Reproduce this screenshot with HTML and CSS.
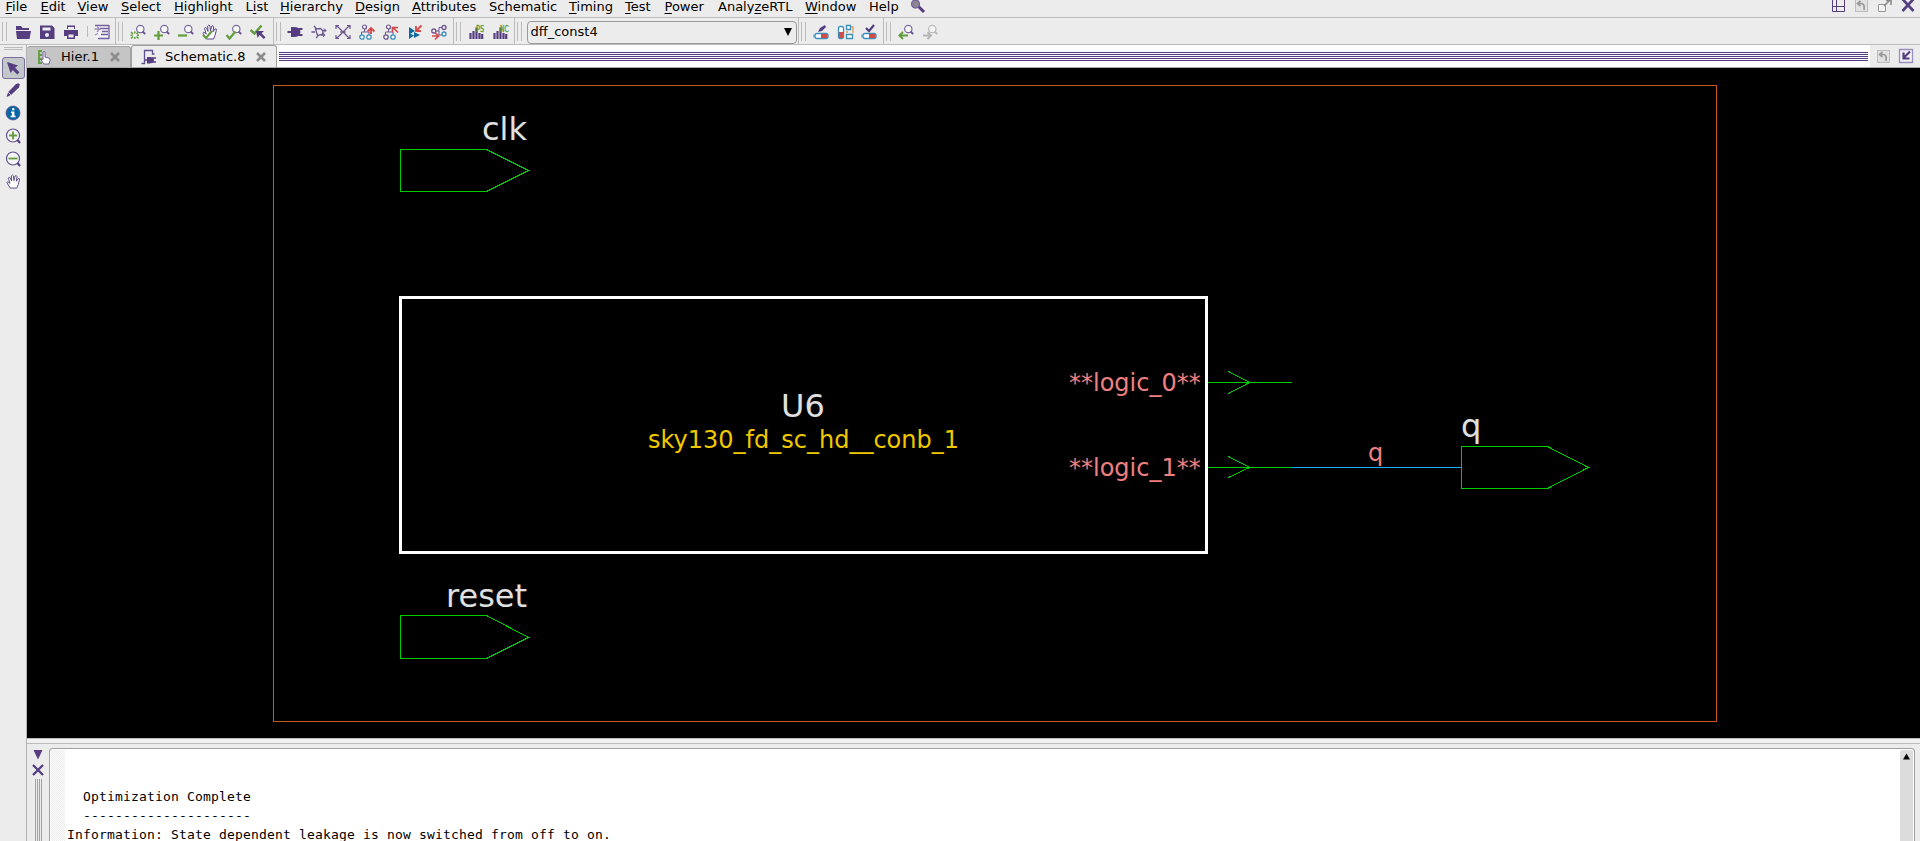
FILE: index.html
```html
<!DOCTYPE html>
<html lang="en">
<head>
<meta charset="utf-8">
<title>Schematic.8</title>
<link rel="stylesheet" href="styles.css">
</head>
<body>
<svg class="defs" aria-hidden="true">
  <defs>
    <symbol id="lens" viewBox="0 0 24 24"><circle cx="14.300" cy="9" r="3.700" fill="#f6f6f6" stroke="#7a68a0" stroke-width="1.200"/><path d="M16.500 11.500l2.700 2.500" stroke="#6b5690" stroke-width="1.900"/></symbol>
    <symbol id="hand" viewBox="0 0 16 16"><path d="M4.500 15L1 9.300Q1.200 7.500 3.200 9L4.300 10 2.500 4.500Q3 2.500 4.500 4.200L6 7.500 5.700 2Q6.800 0 8 2L8.400 7 9.700 2.200Q11 .8 11.700 2.800L11 7.800 13.200 4.800Q14.800 4.500 14.300 6.300L13 11.500 11.500 15z" fill="#fff" stroke="#594485" stroke-width="1"/></symbol>
    <symbol id="undo" viewBox="0 0 14 14"><rect x=".5" y=".5" width="12" height="12" fill="#e2e2e2" stroke="#bdbdbd"/><path d="M5.500 2L2.500 4.500l3 2.500M3 4.500h3.500q3.500.5 2.500 6.500" fill="none" stroke="#999" stroke-width="1.700"/></symbol>
    <symbol id="close" viewBox="0 0 12 12"><path d="M2 2l8 8M10 2l-8 8" stroke="currentColor" stroke-width="2.600"/></symbol>
    <symbol id="bars" viewBox="0 0 24 24"><path d="M6.500 19v-6M9.500 19v-8M12.500 19V7.500M15.500 19v-6M18.200 19v-5" stroke="#553d80" stroke-width="2.200"/></symbol>
    <symbol id="battery" viewBox="0 0 24 24"><rect x="5" y="13.500" width="13" height="5" rx="2" fill="#fff" stroke="#3b8fbd" stroke-width="1.300"/><rect x="11" y="14" width="6.500" height="4" fill="#d24b4b"/><path d="M4 14.500v3" stroke="#3b8fbd"/></symbol>
  </defs>
</svg>

<div class="app">
  <header class="menubar">
    <nav class="menus">
      <span><u>F</u>ile</span><span><u>E</u>dit</span><span><u>V</u>iew</span><span><u>S</u>elect</span><span><u>H</u>ighlight</span><span>L<u>i</u>st</span><span><u>H</u>ierarchy</span><span><u>D</u>esign</span><span><u>A</u>ttributes</span><span>S<u>c</u>hematic</span><span><u>T</u>iming</span><span><u>T</u>est</span><span><u>P</u>ower</span><span>Analy<u>z</u>eRTL</span><span><u>W</u>indow</span><span>Help</span>
      <svg class="finder" viewBox="0 0 16 14"><path d="M8 6l6 6" stroke="#553d80" stroke-width="3"/><circle cx="5.500" cy="4" r="4" fill="#8a8793" stroke="#7462a0" stroke-width="1.300"/></svg>
    </nav>
    <div class="window-tools">
      <svg viewBox="0 0 16 14"><path d="M1.500 0v11.500h12V0M5.500 0v11.500M1.500 6.500h12" fill="none" stroke="#553d80"/></svg>
      <svg viewBox="0 0 16 14"><use href="#undo" x="1" y="-1" width="14" height="14"/></svg>
      <svg viewBox="0 0 16 14"><path d="M1.500 4.500h7v7h-7z" fill="#f2f2f2" stroke="#999"/><path d="M7 6l7-7M9 .5h5V5" fill="none" stroke="#8b8b8b" stroke-width="1.600"/></svg>
      <svg viewBox="0 0 16 14"><path d="M2.500-1l11 12M13.500-1l-11 12" stroke="#553d80" stroke-width="2.700"/></svg>
    </div>
  </header>

  <div class="toolbar">
    <div class="group g-file">
      <svg viewBox="0 0 24 24"><path d="M5 6h5l1.500 2H18v2H5zM5 11h15l-1.500 8H6z" fill="#553d80"/></svg>
      <svg viewBox="0 0 24 24"><path d="M5 5.500h12l2.500 2.500v11H5z" fill="#553d80"/><path d="M7.500 7.500h8v3h-8z" fill="#ececec"/><circle cx="12" cy="15" r="2" fill="#ececec"/></svg>
      <svg viewBox="0 0 24 24"><path d="M8 9V5.500h8V9M5 10h14v6h-3v3H8v-3H5z" fill="#553d80"/><path d="M9 7h6v2H9zM9.500 14.500h5v3h-5z" fill="#ececec"/></svg>
      <i class="mini-sep"></i>
      <svg viewBox="0 0 24 24"><path d="M5.500 6h13v13h-13z" fill="#f5f3f8"/><path d="M5 5.500h14M10 8.500h9M12 11.500h6M11 14.500h7M8 18.500h11M19 5v14" stroke="#7462a0" stroke-width="1.300"/><path d="M4.500 9h5L7 6.500M9.500 9L7 12M5 15l3-1.500" fill="none" stroke="#9a8cb8" stroke-width="1.300"/></svg>
    </div>
    <div class="group g-view">
      <svg viewBox="0 0 24 24"><use href="#lens"/><path d="M5 12l2 2M12.500 12l-2 2M5 18.500l2-2M12.500 18.500l-2-2M8.800 11.500v2M8.800 17v2M4.500 15.300h2M11 15.300h2" stroke="#619c3d" stroke-width="1.500"/></svg>
      <svg viewBox="0 0 24 24"><use href="#lens"/><path d="M8.500 11v9M4 15.500h9" stroke="#619c3d" stroke-width="2.200"/></svg>
      <svg viewBox="0 0 24 24"><use href="#lens"/><path d="M4 15.500h9" stroke="#619c3d" stroke-width="2.200"/></svg>
      <svg viewBox="0 0 24 24"><use href="#hand" x="4" y="4" width="16" height="16"/><path d="M5 15l3 3 6-7" fill="none" stroke="#619c3d" stroke-width="2.200"/></svg>
      <svg viewBox="0 0 24 24"><use href="#lens"/><path d="M4.500 15l3 3.500 6-7" fill="none" stroke="#619c3d" stroke-width="2.200"/></svg>
      <svg viewBox="0 0 24 24"><path d="M4.500 10l4 3.500 7-8" fill="none" stroke="#619c3d" stroke-width="2.400"/><path d="M10 11h8l-2.500 2.300 4 4-1.800 1.700-4-4L11.500 18z" fill="#553d80"/></svg>
    </div>
    <div class="group g-schem">
      <svg viewBox="0 0 24 24"><path d="M4.500 12h5M15 9h4.500M15 15h4.500" stroke="#553d80" stroke-width="1.800"/><path d="M8 7h3q6 0 6.500 5-.5 5-6.500 5H8z" fill="#553d80"/></svg>
      <svg viewBox="0 0 24 24"><path d="M4.500 12H8M15 10.500h4M14 15h4M8.500 9l5-.5q4 2.500 1.500 6l-4.500 1zM7 6l3 3.500M11 16l-2 2" fill="none" stroke="#6b5690" stroke-width="1.300"/><path d="M17 8.500l2 2-2 2M16 13l2 2-2 2" fill="none" stroke="#6b5690"/></svg>
      <svg viewBox="0 0 24 24"><path d="M5.500 5.500l13 13M18.500 5.500l-13 13M9 12h6M5 9V5.500h3M16 5.500h3V9M5 15v3.500h3M16 18.500h3V15" fill="none" stroke="#6b5690" stroke-width="1.200"/></svg>
      <svg viewBox="0 0 24 24"><path d="M9.500 9v3h-3v3M9.500 12H14v3" fill="none" stroke="#6b5690"/><circle cx="9.500" cy="7" r="2" fill="#f4f4f4" stroke="#6b5690" stroke-width="1.200"/><circle cx="7" cy="17" r="2.200" fill="#f4f4f4" stroke="#3b8fbd" stroke-width="1.300"/><circle cx="14" cy="17" r="2.200" fill="#f4f4f4" stroke="#3b8fbd" stroke-width="1.300"/><path d="M16 14V8.500M12.500 11.500L16 8l3.500 3.500" fill="none" stroke="#d24b4b" stroke-width="1.900"/></svg>
      <svg viewBox="0 0 24 24"><path d="M9.500 9v3h-3v3M9.500 12H14v3" fill="none" stroke="#6b5690"/><circle cx="9.500" cy="7" r="2" fill="#f4f4f4" stroke="#6b5690" stroke-width="1.200"/><circle cx="7" cy="17" r="2.200" fill="#f4f4f4" stroke="#6b5690" stroke-width="1.300"/><circle cx="14" cy="17" r="2.200" fill="#f4f4f4" stroke="#3b8fbd" stroke-width="1.300"/><path d="M19 12.500l-5-5M13.500 12V7.500H19" fill="none" stroke="#d24b4b" stroke-width="1.700"/></svg>
      <svg viewBox="0 0 24 24"><path d="M6 7l6 4-6 3.500zM6 13l5 2.500L6 19zM11 12l6 3-6 3z" fill="#0e68a0"/><path d="M18.500 5.500l-5 5M13 6v5h5" fill="none" stroke="#d24b4b" stroke-width="1.800"/></svg>
      <svg viewBox="0 0 24 24"><path d="M8 11h4V7.500h4M12 11v4h4" fill="none" stroke="#6b5690"/><circle cx="6.800" cy="11" r="2" fill="#f4f4f4" stroke="#6b5690" stroke-width="1.300"/><circle cx="17" cy="7.500" r="2" fill="#f4f4f4" stroke="#6b5690" stroke-width="1.300"/><circle cx="17" cy="14" r="2" fill="#f4f4f4" stroke="#3b8fbd" stroke-width="1.300"/><path d="M5 16h6M8 12.500l3.500 3.500L8 19.500" fill="none" stroke="#d24b4b" stroke-width="1.700"/></svg>
    </div>
    <div class="group g-hist">
      <svg viewBox="0 0 24 24"><use href="#bars"/><text class="badge" x="12" y="11.500" textLength="8" lengthAdjust="spacingAndGlyphs">PS</text></svg>
      <svg viewBox="0 0 24 24"><use href="#bars"/><text class="badge" x="12" y="11.500" textLength="8.500" lengthAdjust="spacingAndGlyphs">NC</text></svg>
    </div>
    <div class="group g-design">
      <div class="combo"><span>dff_const4</span><svg viewBox="0 0 8 8"><path d="M0 0h8L4 8z"/></svg></div>
    </div>
    <div class="group g-power">
      <svg viewBox="0 0 24 24"><use href="#battery"/><path d="M8 12l2-4 5-3 1 2-4 4z" fill="#553d80"/></svg>
      <svg viewBox="0 0 24 24"><rect x="4.500" y="6.500" width="5" height="12" rx="1.500" fill="#fff" stroke="#3b8fbd" stroke-width="1.300"/><path d="M5 12h4v6H5z" fill="#d24b4b"/><path d="M12.500 5.500h4v4h-4zM12.500 14.500h6v4h-6z" fill="#fff" stroke="#3b8fbd" stroke-width="1.300"/><path d="M17 7h2v6M12 12h2" fill="none" stroke="#e29a4f" stroke-width="1.300"/></svg>
      <svg viewBox="0 0 24 24"><use href="#battery"/><path d="M8 8l3 3 5-6" fill="none" stroke="#553d80" stroke-width="2.200"/></svg>
    </div>
    <div class="group g-last">
      <svg viewBox="0 0 24 24"><use href="#lens"/><path d="M5.500 15.500h8.500M9 12l-3.500 3.500L9 19" fill="none" stroke="#619c3d" stroke-width="2"/></svg>
      <svg viewBox="0 0 24 24"><circle cx="14.300" cy="9" r="3.700" fill="#f3f3f3" stroke="#bbb" stroke-width="1.200"/><path d="M16.500 11.500l2.700 2.500" stroke="#bbb" stroke-width="1.900"/><path d="M5 15.500h8M9.500 12l3.500 3.500L9.500 19" fill="none" stroke="#b5b5b5" stroke-width="2"/></svg>
    </div>
  </div>

  <div class="workspace">
    <aside class="sidebar">
      <i class="grip"></i>
      <div class="tool active"><svg viewBox="0 0 16 16"><path d="M2 2l11 3.500-3 2.300 4.500 4.500-2.200 2.200L7.800 10 5.500 13z" fill="#553d80"/></svg></div>
      <div class="tool"><svg viewBox="0 0 16 16"><path d="M1.500 15l1.700-5L11 2l2.500-.8 1.300 1.300-.8 3L6 13z" fill="#553d80"/><path d="M3.300 10.300l2.500 2.500" stroke="#ececec"/></svg></div>
      <div class="tool"><svg viewBox="0 0 16 16"><circle cx="8" cy="8" r="7" fill="#0667a6" stroke="#60508e" stroke-width=".8"/><path d="M7 3.300h2.400v2H7zM6 6.500h3.400v4.300h1.200v1.500H5.600v-1.500h1.300V8H6z" fill="#fff"/></svg></div>
      <div class="tool"><svg viewBox="0 0 16 16"><circle cx="8" cy="7.500" r="6.500" fill="#f5f5f5" stroke="#60508e" stroke-width="1.200"/><path d="M8 3.500v8M4 7.500h8" stroke="#619c3d" stroke-width="1.800"/><path d="M12.500 12l2.500 3" stroke="#553d80" stroke-width="2"/></svg></div>
      <div class="tool"><svg viewBox="0 0 16 16"><circle cx="8" cy="7.500" r="6.500" fill="#f5f5f5" stroke="#60508e" stroke-width="1.200"/><path d="M3.500 7.500h9" stroke="#619c3d" stroke-width="1.800"/><path d="M12.500 12l2.500 3" stroke="#553d80" stroke-width="2"/></svg></div>
      <div class="tool"><svg viewBox="0 0 16 16"><use href="#hand" x="1" y="0" width="15" height="15"/></svg></div>
    </aside>

    <main class="main">
      <div class="tabbar">
        <div class="tab inactive">
          <svg class="tab-icon" viewBox="0 0 16 16"><path d="M3 1v13h3M3 2h3M3 6h3M3 10h3" fill="none" stroke="#619c3d" stroke-width="1.800"/><path d="M7 3q1.500-1 2 0v5l4 1.200q1.500.5 1 2.500l-1 3.300H8l-3-4q.3-1.300 2-.3z" fill="#fff" stroke="#7462a0"/></svg>
          <span>Hier.1</span>
          <svg class="tab-close" viewBox="0 0 12 12"><use href="#close"/></svg>
        </div>
        <div class="tab current">
          <svg class="tab-icon" viewBox="0 0 16 16"><path d="M.5 14.500h3v-13h8V5h2" fill="none" stroke="#60508e" stroke-width="1.300"/><path d="M4 11h3M11 9h4M11 13h4" stroke="#553d80" stroke-width="1.500"/><path d="M6 8h3q4 .3 4 3t-4 3.500H6z" fill="#553d80"/></svg>
          <span>Schematic.8</span>
          <svg class="tab-close" viewBox="0 0 12 12"><use href="#close"/></svg>
        </div>
        <div class="stripes"></div>
        <div class="tab-tools">
          <svg viewBox="0 0 16 16"><use href="#undo" x="2" y="2" width="14" height="14"/></svg>
          <svg viewBox="0 0 16 16"><path d="M1.500 1.500h13v13h-13z" fill="#f1f0f5" stroke="#9a8fbb" stroke-width="1.300"/><path d="M12 3.500L6 9.500M5.500 4.500v6h6" fill="none" stroke="#553d80" stroke-width="2.200"/></svg>
        </div>
      </div>

      <svg class="schematic" viewBox="27 68 1893 670">
        <path class="sheet" d="M273.500 85.500h1443v636h-1443z"/>
        <g class="port">
          <path d="M400.500 149.500h86l42 21-42 21h-86z"/>
          <path d="M400.500 615.500h86l42 22-42 21h-86z"/>
          <path d="M1461.500 446.500h86l41 21-41 21h-86z"/>
          <path d="M1208 382.500h84M1228.500 371.500l21 11-21 11"/>
          <path d="M1208 467.500h83M1228.500 456.500l21 11-21 10"/>
        </g>
        <path class="net" d="M1291 467.500h170"/>
        <rect class="cell" x="400.500" y="297.500" width="806" height="255"/>
        <g class="name">
          <text x="482" y="140">clk</text>
          <text x="446" y="607">reset</text>
          <text x="1461" y="437">q</text>
          <text x="781" y="417">U6</text>
        </g>
        <text class="ref" x="648" y="448">sky130_fd_sc_hd__conb_1</text>
        <g class="pin">
          <text x="1069" y="391">**logic_0**</text>
          <text x="1069" y="476">**logic_1**</text>
          <text x="1368" y="461">q</text>
        </g>
      </svg>

      <section class="console">
        <div class="console-side">
          <svg class="collapse" viewBox="0 0 10 10"><path d="M.5 0h9L5 9.500z" fill="#553d80"/></svg>
          <svg class="dismiss" viewBox="0 0 12 12"><path d="M1 1l10 10M11 1L1 11" stroke="#553d80" stroke-width="2.300"/></svg>
          <i class="console-grip"></i>
        </div>
        <div class="log">
          <div class="gutter"></div>
          <pre>


  Optimization Complete
  ---------------------
Information: State dependent leakage is now switched from off to on.</pre>
          <div class="scrollbar"><svg viewBox="0 0 8 7"><path d="M0 7L4 0l4 7z"/></svg></div>
        </div>
      </section>
    </main>
  </div>
</div>
</body>
</html>
```
FILE: styles.css
```css
* { box-sizing: border-box; }
body {
  margin: 0;
  overflow: hidden;
  background: #ececec;
  color: #000;
  font: 13px/16px "DejaVu Sans", sans-serif;
}
svg { display: block; flex: none; }
.defs { width: 0; height: 0; position: absolute; }
.app { width: 1920px; height: 841px; display: flex; flex-direction: column; overflow: hidden; }

/* Menu bar */
.menubar {
  height: 18px;
  flex: none;
  display: flex;
  justify-content: space-between;
  border-bottom: 1px solid #bcbcbc;
}
.menus {
  display: grid;
  grid-template-columns: 35px 37px 43.500px 53px 71.500px 34.500px 75px 57px 77px 80px 56px 39.500px 53.500px 87px 64px 42px 20px;
  padding-left: 5.500px;
  height: 17px;
  line-height: 14px;
  white-space: nowrap;
}
.menus u { text-underline-offset: 2px; text-decoration-thickness: 1px; text-decoration-skip-ink: none; }
.finder { width: 16px; height: 14px; margin-left: -1px; }
.window-tools { display: flex; gap: 7px; padding-right: 4px; }
.window-tools svg { width: 16px; height: 14px; }

/* Toolbar */
.toolbar { height: 27px; flex: none; display: flex; border-bottom: 1px solid #bcbcbc; }
.group {
  position: relative;
  display: flex;
  align-items: center;
  justify-content: flex-end;
  border-right: 1px solid #bcbcbc;
  padding: 2px 1px 0 0;
}
.group::before {
  content: "";
  position: absolute;
  left: 2px;
  top: 4px;
  width: 3px;
  height: 19px;
  border: solid #bcbcbc;
  border-width: 0 1px;
}
.group > svg { width: 24px; height: 24px; }
.mini-sep { width: 1px; height: 11px; margin: 0 2px 2px 4px; background: #bcbcbc; }
.g-file { width: 116px; }
.g-view { width: 158px; padding-right: 3px; }
.g-schem { width: 180px; padding-right: 2px; }
.g-hist { width: 61px; padding-right: 2px; }
.g-design { width: 284px; }
.g-power { width: 85px; }
.g-last { width: 59px; border-right: 0; padding-right: 1px; }
.badge { font: 8.500px "DejaVu Sans", sans-serif; fill: #619c3d; stroke: #619c3d; stroke-width: .4px; }
.combo {
  width: 270px;
  height: 23px;
  display: flex;
  align-items: center;
  justify-content: space-between;
  border: 1px solid #999;
  border-radius: 4px;
  padding: 0 4px 1px 2.500px;
}
.combo svg { width: 8px; height: 8px; }

/* Left tool strip */
.workspace { flex: 1; display: flex; min-height: 0; }
.sidebar { width: 27px; flex: none; border-right: 1px solid #b3b3b3; padding: 2px 1px 0 2px; }
.grip { display: block; width: 19px; height: 3px; margin: 0 0 7px 2px; border: solid #bcbcbc; border-width: 1px 0; }
.tool { width: 23px; height: 23px; display: flex; align-items: center; justify-content: center; padding: 0 1px 1px 0; }
.tool svg { width: 16px; height: 16px; }
.tool.active { height: 22px; border: 1px solid #7b6d9b; border-radius: 3px; background: #c2c7ca; }

/* Tabs */
.main { flex: 1; display: flex; flex-direction: column; min-width: 0; }
.tabbar { height: 23px; flex: none; display: flex; align-items: flex-end; border-bottom: 1px solid #a6a6a6; background: #fcfcfc; }
.tab { display: flex; align-items: center; border: 1px solid #a0a0a0; border-bottom: 0; border-radius: 3px 3px 0 0; }
.tab-icon { width: 16px; height: 16px; }
.tab-close { width: 12px; height: 12px; color: #8d8d8d; }
.inactive { width: 104px; height: 21px; background: #c5c5c5; padding-left: 9px; border-left: 0; }
.inactive span { width: 48px; margin-left: 9px; }
.current { width: 146px; height: 22px; background: #ececec; padding-left: 9px; }
.current span { width: 90px; margin-left: 8px; }
.stripes {
  flex: 1;
  height: 9px;
  margin: 0 2px 6px;
  background: repeating-linear-gradient(#553d80 0 1px, #fcfcfc 1px 2px);
}
.tab-tools { width: 50px; height: 22px; display: flex; gap: 7px; padding: 3px 0 0 5px; background: #ececec; }
.tab-tools svg { width: 16px; height: 16px; }

/* Drawing */
.schematic { width: 1893px; height: 670px; background: #000; }
.sheet, .port, .net, .cell { fill: none; shape-rendering: crispEdges; }
.sheet { stroke: #c8591c; }
.port { stroke: #00cd00; }
.net { stroke: #1caeff; }
.cell { stroke: #fff; stroke-width: 3px; }
.name { font-size: 32px; fill: #e0e0e0; }
.ref { font-size: 24px; fill: #f0c800; }
.pin { font-size: 24px; fill: #f08080; }

/* Console */
.console {
  flex: 1;
  min-height: 0;
  display: flex;
  border-top: 1px solid #bcbcbc;
  box-shadow: inset 0 4px #f0f0f0, inset 0 5px #bcbcbc;
}
.console-side { width: 22px; flex: none; padding: 11px 0 0 6px; }
.collapse { width: 10px; height: 10px; }
.dismiss { width: 12px; height: 12px; margin-top: 4px; margin-left: -1px; }
.console-grip {
  display: block;
  width: 7px;
  height: 70px;
  margin: 3px 0 0 2px;
  background: repeating-linear-gradient(90deg, #a2a2a2 0 1px, #ececec 1px 2px);
}
.log {
  flex: 1;
  display: flex;
  margin: 9px 5px 0 0;
  border: 1px solid #a0a0a0;
  border-bottom: 0;
  border-radius: 4px 4px 0 0;
  background: #fff;
  padding: 1px 1px 0;
}
.gutter { width: 14px; background: repeating-conic-gradient(#ebebeb 0 25%, #fff 0 50%) 0 0 / 2px 2px; }
.log pre {
  flex: 1;
  margin: -1px 0 0;
  padding: 0 0 0 2px;
  font: 13px/19px "DejaVu Sans Mono", monospace;
  letter-spacing: .173px;
}
.scrollbar { width: 13px; background: #dcdcdc; border-radius: 3px 3px 0 0; padding: 3px 0 0 3px; }
.scrollbar svg { width: 7px; height: 7px; }
```
